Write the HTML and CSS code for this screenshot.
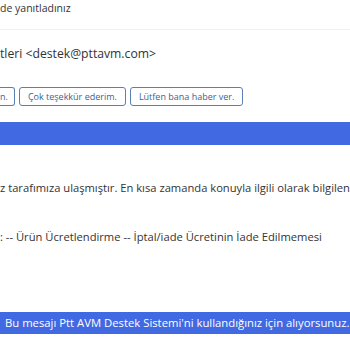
FILE: index.html
```html
<!DOCTYPE html>
<html lang="tr">
<head>
    <meta charset="UTF-8">
    <title>Ptt AVM Destek</title>
    <link rel="stylesheet" href="styles.css">
</head>
<body>
    <div class="subject-line">de yanıtladınız</div>

    <div class="sender">tleri &lt;destek@pttavm.com&gt;</div>

    <div class="replies">
        <button class="reply cut">n.</button>
        <button class="reply">Çok teşekkür ederim.</button>
        <button class="reply">Lütfen bana haber ver.</button>
    </div>

    <div class="banner"></div>

    <div class="message">
        <p class="line">z tarafımıza ulaşmıştır. En kısa zamanda konuyla ilgili olarak bilgilendirileceksiniz.</p>
        <p class="line">: -- Ürün Ücretlendirme -- İptal/iade Ücretinin İade Edilmemesi</p>
    </div>

    <div class="footer-bar">Bu mesajı Ptt AVM Destek Sistemi'ni kullandığınız için alıyorsunuz.</div>
</body>
</html>
```

FILE: styles.css
```css
body {
    margin: 0;
    background: #fff;
    font-family: "Open Sans", "Noto Sans", sans-serif;
    color: #333;
    overflow: hidden;
}
.subject-line {
    height: 29px;
    border-bottom: 1px solid #f1f1f1;
    font-size: 10.5px;
    line-height: 16px;
    color: #333;
}
.sender {
    margin-top: 15px;
    font-size: 12.2px;
    line-height: 18px;
    color: #333;
}
.replies {
    display: flex;
    gap: 4px;
    margin-top: 24px;
}
.reply {
    height: 19px;
    padding: 0 8px;
    border: 1px solid #5a7fb5;
    border-radius: 3px;
    background: #fff;
    color: #3f5f8c;
    font-family: "Open Sans", "Noto Sans", sans-serif;
    font-size: 9px;
    line-height: 17px;
}
.reply.cut {
    border-left: none;
    border-radius: 0 3px 3px 0;
    padding: 0 6px 0 0;
}
.banner {
    margin-top: 16px;
    height: 23px;
    background: #4169e1;
}
.message {
    padding-top: 34px;
}
.line {
    margin: 0 0 32px;
    font-size: 11.2px;
    line-height: 17px;
    white-space: nowrap;
    overflow: hidden;
    color: #333;
}
.footer-bar {
    margin-top: 67px;
    height: 22px;
    padding-left: 5px;
    background: #4169e1;
    color: #fff;
    font-size: 11.3px;
    line-height: 22px;
    white-space: nowrap;
}
```
